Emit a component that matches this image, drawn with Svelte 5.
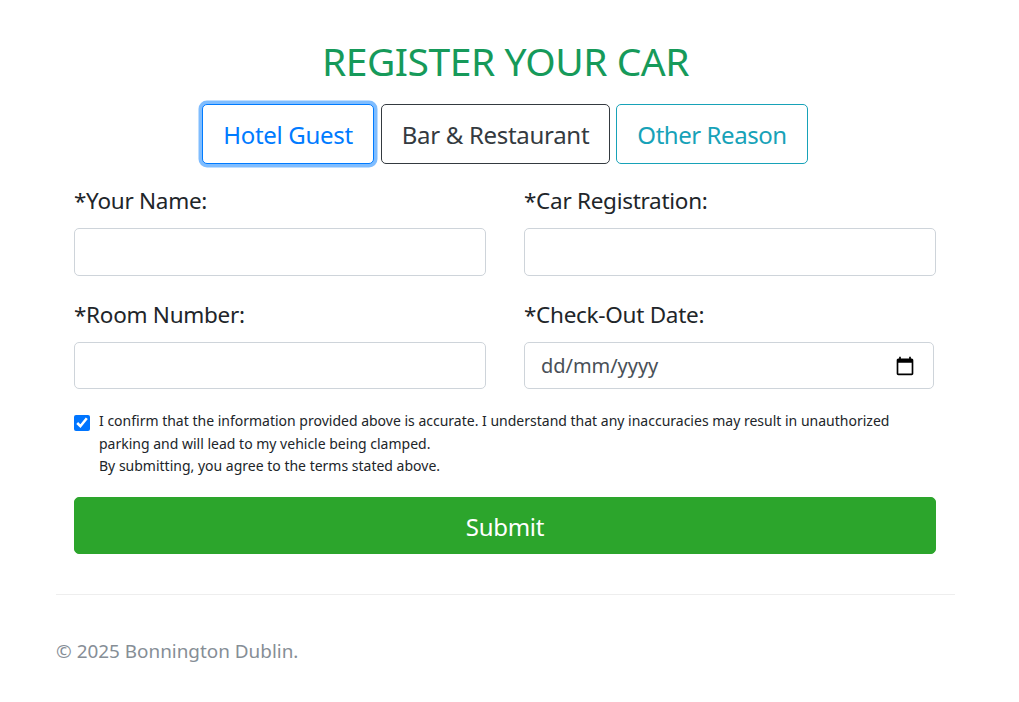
<script>
  let agreed = $state(true);
  let kind = $state('hotel');
</script>

<main class="page">
  <h1>REGISTER YOUR CAR</h1>
  <div class="tabs">
    <button type="button" class="tab blue" onclick={() => (kind = 'hotel')}>Hotel Guest</button>
    <button type="button" class="tab dark" onclick={() => (kind = 'bar')}>Bar &amp; Restaurant</button>
    <button type="button" class="tab teal" onclick={() => (kind = 'other')}>Other Reason</button>
  </div>
  <form class="form" onsubmit={(e) => e.preventDefault()}>
    <div class="grid">
      <label class="field first">
        <span>*Your Name:</span>
        <input type="text" />
      </label>
      <label class="field first">
        <span>*Car Registration:</span>
        <input type="text" />
      </label>
      <label class="field">
        <span>*Room Number:</span>
        <input class="short" type="text" />
      </label>
      <label class="field date">
        <span>*Check-Out Date:</span>
        <div class="date-wrap">
          <input class="short" type="text" placeholder="dd/mm/yyyy" />
          <svg class="cal" viewBox="0 0 24 24" width="20" height="20" aria-hidden="true">
            <path fill="#000" d="M20 3h-1V1h-2v2H7V1H5v2H4c-1.1 0-2 .9-2 2v16c0 1.1.9 2 2 2h16c1.1 0 2-.9 2-2V5c0-1.1-.9-2-2-2zm0 18H4V8h16v13z" />
          </svg>
        </div>
      </label>
    </div>
    <label class="confirm">
      <input type="checkbox" bind:checked={agreed} />
      <span>I confirm that the information provided above is accurate. I understand that any inaccuracies may result in unauthorized parking and will lead to my vehicle being clamped.<br />By submitting, you agree to the terms stated above.</span>
    </label>
    <button class="submit" type="submit">Submit</button>
  </form>
  <footer>© 2025 Bonnington Dublin.</footer>
</main>

<style>
  :global(body) {
    margin: 0;
    background: #fff;
    font-family: "Noto Sans", "Open Sans", sans-serif;
    color: #212529;
  }
  .page {
    width: 899px;
    margin-left: 56px;
    padding-top: 35px;
  }
  h1 {
    margin: 0 0 18px;
    text-align: center;
    font-size: 39px;
    line-height: 51px;
    font-weight: 400;
    color: #169a5a;
    letter-spacing: -0.47px;
  }
  .tabs {
    display: flex;
    justify-content: center;
    gap: 6px;
    margin-right: 1px;
  }
  .tab {
    box-sizing: border-box;
    height: 60px;
    padding: 0;
    border: 1px solid;
    border-radius: 5px;
    background: #fff;
    font: inherit;
    font-size: 24px;
    letter-spacing: -0.3px;
    cursor: pointer;
  }
  .blue {
    width: 172px;
    color: #007bff;
    border-color: #007bff;
    box-shadow: 0 0 0 3.5px rgba(0, 123, 255, 0.5);
  }
  .dark {
    width: 229px;
    margin-left: 1px;
    color: #343a40;
    border-color: #343a40;
  }
  .teal {
    width: 192px;
    color: #17a2b8;
    border-color: #17a2b8;
    letter-spacing: -0.45px;
  }
  .form {
    margin: 20px 19px 0 18px;
  }
  .grid {
    display: grid;
    grid-template-columns: 1fr 1fr;
    column-gap: 38px;
  }
  .field {
    display: flex;
    flex-direction: column;
    margin-bottom: 22px;
  }
  .field span {
    font-size: 22.5px;
    line-height: 34px;
    margin-bottom: 10px;
    letter-spacing: -0.28px;
  }
  .field input {
    box-sizing: border-box;
    width: 100%;
    height: 48px;
    padding: 6px 16px;
    border: 1px solid #ced4da;
    border-radius: 5px;
    background: #fff;
    font: inherit;
    font-size: 20px;
    color: #495057;
  }
  .field input.short {
    height: 47px;
  }
  .date-wrap {
    position: relative;
    width: 410px;
  }
  .date-wrap input {
    display: block;
    letter-spacing: -0.05px;
  }
  .date-wrap input::placeholder {
    color: #495057;
    opacity: 1;
  }
  .cal {
    position: absolute;
    right: 19px;
    top: 14px;
  }
  .confirm {
    display: flex;
    align-items: flex-start;
    gap: 9.5px;
    margin-top: -1px;
    font-size: 14px;
    line-height: 22.5px;
  }
  .confirm input {
    flex: none;
    width: 15.5px;
    height: 15.5px;
    margin: 5px 0 0;
    accent-color: #0075ff;
  }
  .submit {
    display: block;
    width: 100%;
    height: 57px;
    margin-top: 19px;
    padding: 2px 0 0;
    border: 1px solid #2ca52c;
    border-radius: 5px;
    background: #2ca52c;
    color: #fff;
    font: inherit;
    font-size: 24px;
    letter-spacing: -0.3px;
    cursor: pointer;
  }
  footer {
    margin-top: 40px;
    padding-top: 43px;
    border-top: 1px solid #eeeeee;
    font-size: 18.9px;
    line-height: 27px;
    color: #868e96;
  }
</style>
